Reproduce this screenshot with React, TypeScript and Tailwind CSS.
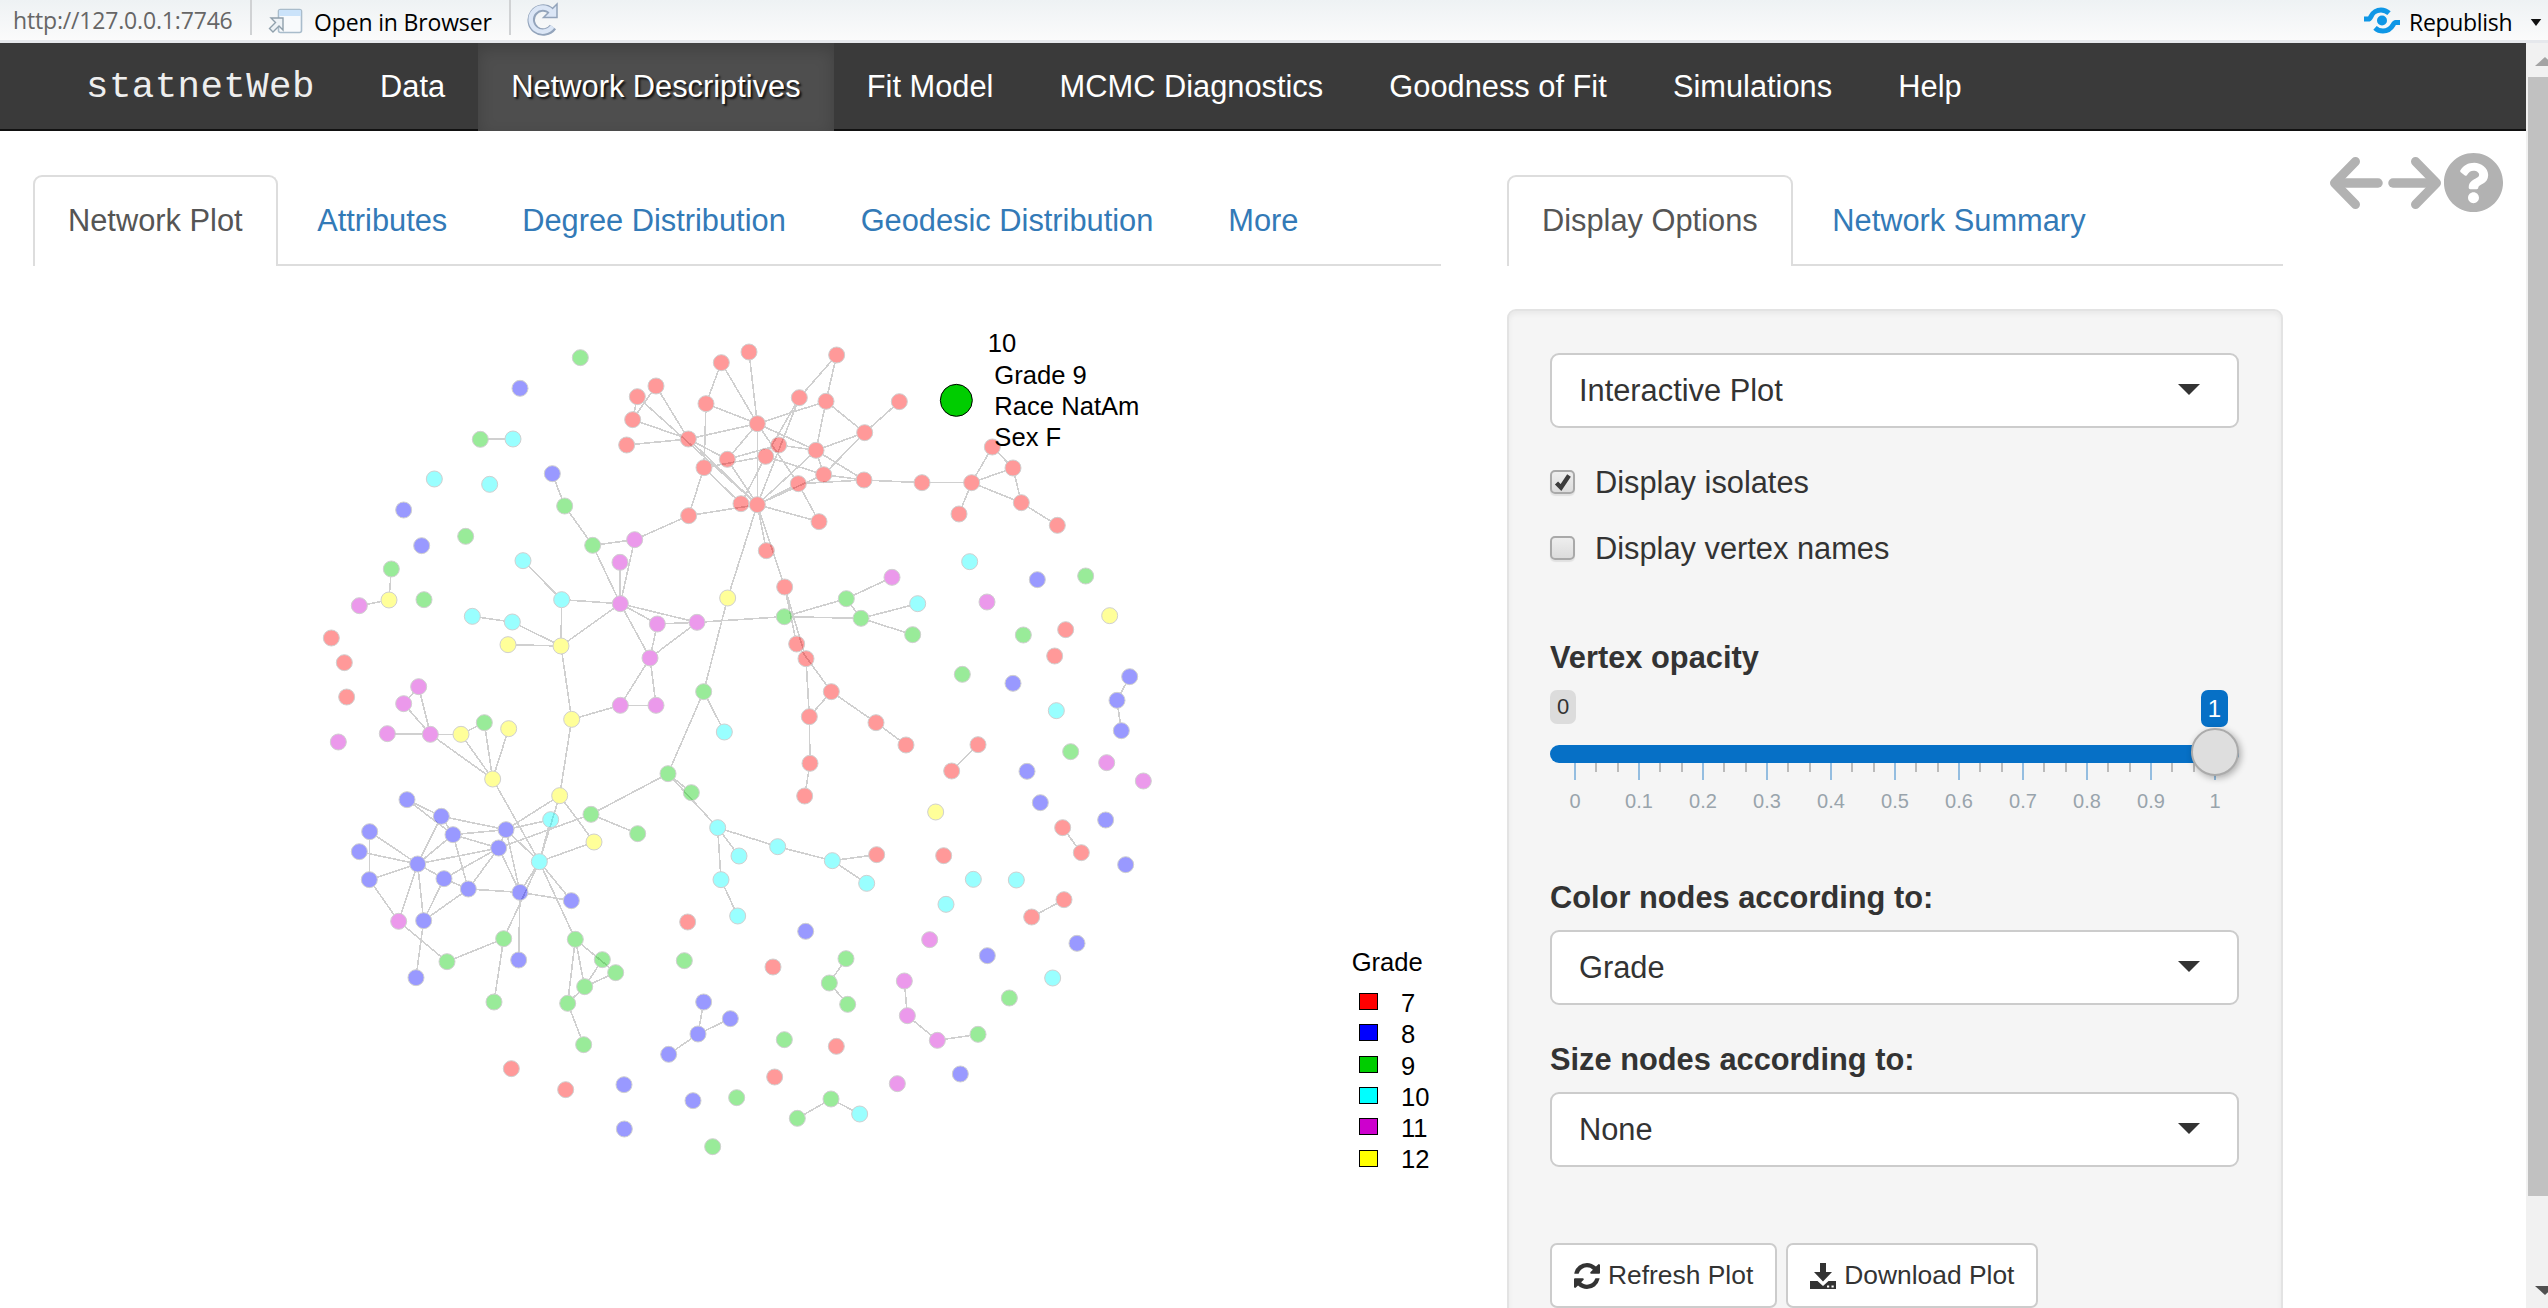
import React from "react";
import { FaQuestionCircle } from "react-icons/fa";

type Point = [number, number];

const GRADES: Record<string, { fill: string; label: string }> = {
  r: { fill: "#ff0000", label: "7" },
  b: { fill: "#0000ff", label: "8" },
  g: { fill: "#00cd00", label: "9" },
  c: { fill: "#00ffff", label: "10" },
  m: { fill: "#cd00cd", label: "11" },
  y: { fill: "#ffff00", label: "12" },
};

/* Vertex positions per grade, in plot units (three units to a pixel). */
const NODES: Record<string, Point[]> = {
  r: [
    [1011, 259], [1067, 227], [997, 328], [979, 404], [1164, 386], [1263, 157], [1217, 280], [1281, 447],
    [1211, 472], [1322, 580], [1165, 616], [1346, 125], [1609, 134], [1497, 262], [1577, 273], [1797, 274],
    [1371, 340], [1693, 367], [1435, 404], [1396, 438], [1547, 420], [1570, 493], [1494, 520], [1691, 509],
    [1865, 517], [2014, 517], [2076, 410], [2138, 473], [2163, 577], [1976, 611], [1371, 583], [1556, 634],
    [1398, 721], [1453, 830], [1489, 1001], [1517, 1045], [1593, 1144], [1527, 1219], [1727, 1237], [1817, 1304],
    [1529, 1359], [1513, 1457], [2271, 645], [93, 983], [132, 1057], [139, 1160], [2296, 958], [2263, 1037],
    [2033, 1303], [1954, 1382], [2287, 1552], [2343, 1627], [1729, 1633], [1930, 1636], [2291, 1768], [2194, 1820],
    [1162, 1835], [1418, 1970], [1608, 2208], [1423, 2300], [633, 2275], [796, 2338],
  ],
  m: [
    [1003, 688], [959, 756], [960, 880], [1071, 941], [1190, 936], [1049, 1043], [960, 1185], [1067, 1185],
    [177, 886], [355, 1129], [310, 1180], [261, 1270], [390, 1272], [114, 1295], [1775, 801], [2060, 875],
    [295, 1833], [1888, 1888], [1812, 2012], [1821, 2116], [1911, 2190], [1791, 2320], [2419, 1357], [2529, 1412],
  ],
  g: [
    [840, 142], [540, 387], [793, 587], [496, 678], [877, 705], [273, 776], [371, 868], [552, 1237],
    [1210, 1144], [1452, 919], [1638, 865], [1682, 924], [1837, 973], [2169, 974], [1986, 1092], [2356, 797],
    [872, 1512], [1103, 1390], [1173, 1447], [1012, 1570], [610, 1885], [825, 1887], [440, 1954], [906, 1948],
    [946, 1987], [853, 2029], [802, 2079], [581, 2075], [850, 2203], [1309, 2362], [1237, 2509], [1152, 1951],
    [2311, 1324], [1637, 1945], [1587, 2018], [1642, 2082], [2033, 2172], [2127, 2063], [1452, 2188], [1592, 2366],
    [1491, 2424],
  ],
  c: [
    [638, 386], [402, 506], [568, 522], [668, 751], [784, 868], [516, 918], [636, 935], [1272, 1265],
    [1852, 880], [2008, 754], [2268, 1201], [751, 1528], [717, 1654], [1252, 1552], [1316, 1637], [1262, 1708],
    [1312, 1817], [1432, 1609], [1596, 1651], [1699, 1719], [2019, 1707], [2148, 1709], [1937, 1782], [2257, 2003],
    [1678, 2411],
  ],
  y: [
    [266, 869], [623, 1003], [782, 1007], [1282, 863], [482, 1272], [625, 1255], [814, 1227], [577, 1406],
    [778, 1456], [881, 1595], [1906, 1505], [2428, 916],
  ],
  b: [
    [659, 234], [756, 490], [310, 599], [364, 706], [2211, 808], [2138, 1119], [2488, 1099], [2450, 1170],
    [2463, 1261], [320, 1468], [423, 1518], [458, 1573], [208, 1564], [177, 1624], [617, 1558], [595, 1613],
    [352, 1661], [207, 1708], [431, 1705], [504, 1736], [659, 1746], [813, 1771], [370, 1831], [655, 1949],
    [347, 2002], [971, 2323], [972, 2456], [1178, 2371], [1210, 2075], [1290, 2125], [1193, 2171], [1105, 2232],
    [2180, 1383], [2220, 1477], [1516, 1863], [2061, 1936], [2330, 1899], [1980, 2291], [2416, 1529], [2476, 1663],
  ],
};

/* Ties between students, written as pairs of vertex ids. */
const EDGES = `
r0-r2 r0-r30 r1-r2 r1-r4 r2-r4 r3-r4 r4-r16 r4-r7 r4-r30 r5-r6 r5-r16 r11-r16 r6-r16 r6-r8 r8-r10 r8-r9 r8-r19
r7-r16 r7-r18 r7-r30 r10-r30 r9-r19 r12-r13 r12-r14 r14-r16 r14-r17 r14-r20 r15-r17 r16-r20 r16-r30 r16-r22
r13-r30 r13-r19 r18-r20 r19-r21 r17-r20 r17-r21 r20-r21 r20-r23 r20-r30 r21-r23 r21-r30 r22-r30 r22-r23 r22-r31
r30-r31 r30-r32 r30-r33 r23-r24 r24-r25 r25-r26 r25-r27 r25-r28 r25-r29 r26-r27 r27-r28 r28-r42 r33-r34 r33-r35
r34-r36 r35-r37 r36-r37 r36-r38 r38-r39 r37-r40 r40-r41 r48-r49 r50-r51 r54-r55
r10-m0 g4-m0 g2-g4 b1-g2 g4-m2 m1-m2 m0-m2 m2-c4 m2-y2 m2-m3 m2-m4 m3-m4 m3-m5 m4-m5 m2-m5 m5-m6 m5-m7 m6-m7
m4-g9 g1-c0 c3-c4 c4-y2 c5-c6 c6-y2 y1-y2 y2-y6 y6-m6 y6-y8 g5-y0 m8-y0 r30-y3 y3-g8 g8-c7 g8-g17
m9-m10 m9-m12 m10-m12 m11-m12 m12-y4 y4-g7 y4-y7 m12-y7 g7-y7 y5-y7 y7-c12 y8-b14 y8-c12 c11-c12 y8-y9 y9-c12
g16-b15 g16-g17 g16-g19 g17-g18 g17-c13 b9-b10 b9-b11 b10-b14 b10-b16 b10-b11 b11-b14 b11-b15 b11-b19 b11-b16
b12-b16 b12-b17 b13-b16 b16-b17 b16-b15 b16-b18 b16-m16 b16-b22 b17-m16 b18-b15 b18-b19 b18-b22 b19-b15 b19-b20
b19-b22 b14-b15 b14-c12 b14-b20 b14-c11 b15-b20 b20-c12 b20-b21 b20-b23 c12-b21 c12-g20 c12-g21 g20-g22 m16-g22
b22-b24 g20-g27 g21-g24 g21-g25 g21-g26 g23-g25 g24-g25 g25-g26 g26-g28 c13-c17 c13-c14 c13-c15 c15-c16 c17-c18
c18-r52 c18-c19 g9-g10 g9-g11 g10-m14 g10-g11 g11-c8 g11-g12 b6-b7 b7-b8 g33-g34 g34-g35 m18-m19 m19-m20 m20-g36
g39-g40 g39-c24 b28-b30 b29-b30 b30-b31
`.trim().split(/\s+/);

const RADIUS = 24;

function find(id: string): Point {
  return NODES[id[0]][Number(id.slice(1))];
}

/* An edge runs from rim to rim, so it never shows through its own end points. */
function Edge({ pair }: { pair: string }) {
  const [from, to] = pair.split("-");
  const [x1, y1] = find(from);
  const [x2, y2] = find(to);
  const length = Math.hypot(x2 - x1, y2 - y1);
  const dx = ((x2 - x1) / length) * RADIUS;
  const dy = ((y2 - y1) / length) * RADIUS;
  return <line x1={x1 + dx} y1={y1 + dy} x2={x2 - dx} y2={y2 - dy} />;
}

function NetworkPlot() {
  return (
    <svg
      viewBox="-802 -127 4224 3120"
      className="block h-[1040px] w-[1408px] font-['Liberation_Sans',sans-serif]"
    >
      <g stroke="#d0d0d0" strokeWidth="4.8" shapeRendering="crispEdges">
        {EDGES.map((pair) => (
          <Edge key={pair} pair={pair} />
        ))}
      </g>
      {Object.entries(NODES).map(([grade, points]) => (
        <g key={grade} fill={GRADES[grade].fill} fillOpacity="0.4" stroke="#d0d0d0" strokeWidth="3">
          {points.map(([x, y]) => (
            <circle key={`${x}-${y}`} cx={x} cy={y} r={RADIUS} />
          ))}
        </g>
      ))}
      <circle cx="1968" cy="270" r="48" fill="#00cd00" stroke="#000" strokeWidth="3" />
      <g fontSize="76.8" fill="#000">
        <text x="2062" y="125">10</text>
        <text x="2082" y="220">Grade 9</text>
        <text x="2082" y="313">Race NatAm</text>
        <text x="2082" y="407">Sex F</text>
        <text x="3154" y="1982">Grade</text>
        {["r", "b", "g", "c", "m", "y"].map((grade, i) => (
          <g key={grade}>
            <rect
              x="3178"
              y={2050 + i * 93.8}
              width="54"
              height="48"
              fill={GRADES[grade].fill}
              stroke="#000"
              strokeWidth="3"
              shapeRendering="crispEdges"
            />
            <text x="3302" y={2105 + i * 93.8}>{GRADES[grade].label}</text>
          </g>
        ))}
      </g>
    </svg>
  );
}

function Toolbar() {
  return (
    <div className="flex h-[43px] items-start border-b-[3px] border-[#e6e8ec] bg-linear-to-b from-[#eef2f4] to-[#fbfbfb] font-['Open_Sans','Noto_Sans',sans-serif] text-[23px] leading-[40px]">
      <span className="ml-[13px] w-[237px] whitespace-nowrap tracking-[-0.17px] text-[#666]">http://127.0.0.1:7746</span>
      <div className="h-[35px] w-[2px] bg-[#d0d2d4]" />
      <svg viewBox="0 0 36 28" className="mt-[8px] ml-[16px] h-[28px] w-[36px]">
        <rect x="10.5" y="1.5" width="23" height="23" rx="2" fill="#f8fafc" stroke="#a9bccb" strokeWidth="1.6" />
        <path d="M11 3q0-1 1-1h20q1 0 1 1v5H11z" fill="#cbe3fa" />
        <path d="M3 10h12v12l-4-4-6 6-3.500-3.500 6-6z" fill="#edf2f6" stroke="#90a0ac" strokeWidth="1.4" />
      </svg>
      <span className="ml-[10px] mt-[2px] w-[195px] whitespace-nowrap tracking-[-0.16px] text-black">Open in Browser</span>
      <div className="h-[35px] w-[2px] bg-[#d0d2d4]" />
      <svg viewBox="0 0 34 34" className="mt-[2px] ml-[14px] h-[34px] w-[34px]" fill="none">
        <path d="M25.500 8.500A12 12 0 1 0 28 25" stroke="#93a4bb" strokeWidth="7.500" />
        <path d="M32 2v13.500H18.500z" fill="#dbe6f6" stroke="#93a4bb" strokeWidth="1.500" />
        <path d="M26.500 9.500A12 12 0 1 0 27.500 24.500" stroke="#dbe6f6" strokeWidth="4.500" />
      </svg>
      <div className="ml-auto flex items-start">
        <svg viewBox="0 0 36 27" className="mt-[7px] h-[27px] w-[36px]" fill="none" stroke="#0f97e6" strokeWidth="5">
          <circle cx="18" cy="13.500" r="5" fill="#0f97e6" stroke="none" />
          <path d="M0 12h4.500C7.500 12 7 3 17 3q4.500 0 8 3.200" />
          <path d="M36 15.500h-4.500C28.500 15.500 29 24 19 24q-4.500 0-8-3.200" />
        </svg>
        <span className="mt-[2px] ml-[9px] w-[121px] tracking-[-0.3px] text-black">Republish</span>
        <svg viewBox="0 0 12 8" className="mt-[19px] mr-[6px] h-[7px] w-[12px]">
          <path d="M0 0h12L6 8z" fill="#111" />
        </svg>
      </div>
    </div>
  );
}

const NAV_ITEMS = [
  "Data",
  "Network Descriptives",
  "Fit Model",
  "MCMC Diagnostics",
  "Goodness of Fit",
  "Simulations",
  "Help",
];

function Navbar() {
  return (
    <nav className="flex h-[88px] bg-[linear-gradient(to_bottom,#3a3a3a_86px,#111_86px)] leading-[88px] text-white">
      <span className="mr-[87px] w-[260px] pl-[86px] font-['Liberation_Mono',monospace] text-[37.4px] tracking-[0.45px] text-[#eee]">
        statnetWeb
      </span>
      {NAV_ITEMS.map((item) => (
        <a
          key={item}
          className={
            item === "Network Descriptives"
              ? "bg-[#4e4e4e] px-[33.1px] whitespace-nowrap shadow-[inset_0_6px_16px_rgba(0,0,0,0.18)] [text-shadow:2px_2px_2px_#111]"
              : "px-[33.1px] whitespace-nowrap"
          }
        >
          {item}
        </a>
      ))}
    </nav>
  );
}

function Tabs({ items }: { items: string[] }) {
  return (
    <div className="flex h-[91px] border-b-2 border-[#ddd]">
      {items.map((item, i) => (
        <a
          key={item}
          className={
            i === 0
              ? "mr-[4.6px] h-[91px] rounded-t-[9px] border-2 border-b-0 border-[#ddd] bg-white px-[33px] pt-[22px] leading-[44px] text-[#555]"
              : "mr-[4.9px] border-2 border-b-0 border-transparent px-[33px] pt-[22px] leading-[44px] text-[#337ab7]"
          }
        >
          {item}
        </a>
      ))}
    </div>
  );
}

function Select({ value }: { value: string }) {
  return (
    <div className="flex h-[75px] items-center justify-between rounded-[9px] border-2 border-[#ccc] bg-white pr-[37px] pl-[27px]">
      <span className="pt-[1px]">{value}</span>
      <svg viewBox="0 0 22 11" className="-mt-[2px] h-[11px] w-[22px]">
        <path d="M0 0h22L11 11z" fill="#333" />
      </svg>
    </div>
  );
}

function Checkbox({ label, checked }: { label: string; checked?: boolean }) {
  return (
    <label className="flex h-[44px] items-center leading-[44px]">
      <span className="mr-[20px] flex h-[24px] w-[25px] items-center justify-center rounded-[5px] border-2 border-[#a9a9a9] bg-linear-to-b from-[#eee] to-[#dcdcdc] shadow-[0_2px_1px_rgba(0,0,0,0.08)]">
        {checked && (
          <svg viewBox="0 0 18 18" className="h-[18px] w-[18px]" fill="none">
            <path d="M2.500 10l4.500 4.500L15 2.500" stroke="#3c3c3c" strokeWidth="4.4" />
          </svg>
        )}
      </span>
      <span className="pt-[1px]">{label}</span>
    </label>
  );
}

const TICKS = ["0", "0.1", "0.2", "0.3", "0.4", "0.5", "0.6", "0.7", "0.8", "0.9", "1"];

function OpacitySlider() {
  return (
    <div className="mt-[10px] h-[141px]">
      <div className="flex items-start justify-between pr-[11px]">
        <span className="h-[34px] w-[26px] rounded-[7px] bg-[#dcdcdc] text-center text-[22px] leading-[33px]">0</span>
        <span className="h-[37px] w-[27px] rounded-[7px] bg-[#0670c6] text-center text-[24px] leading-[37px] text-white">1</span>
      </div>
      <div className="relative mt-[18px] h-[18px] rounded-[9px] bg-[#0670c6]">
        <div className="absolute -top-[17px] right-0 z-10 h-[48px] w-[48px] rounded-full border-2 border-[#ababab] bg-[#dedede] shadow-[2px_2px_7px_rgba(0,0,0,0.3)]" />
      </div>
      <div className="mr-[-8px] ml-[-7px] flex">
        {TICKS.map((tick) => (
          <div key={tick} className="w-[64px] shrink-0 text-center text-[20px] leading-[24px] text-[#99a4ac]">
            <div className="flex h-[17px] justify-center">
              <div className="h-[17px] w-[2px] bg-[#94bde0]" />
              {tick !== "1" && (
                <div className="relative">
                  <div className="absolute left-[19px] h-[9px] w-[2px] bg-[#bbb]" />
                  <div className="absolute left-[41px] h-[9px] w-[2px] bg-[#bbb]" />
                </div>
              )}
            </div>
            <div className="mt-[9px]">{tick}</div>
          </div>
        ))}
      </div>
    </div>
  );
}

function PlotButton({ children }: { children: React.ReactNode }) {
  return (
    <button className="flex h-[65px] items-center rounded-[7px] border-2 border-[#ccc] bg-white px-[22px] text-[26.4px] whitespace-nowrap">
      {children}
    </button>
  );
}

function DisplayOptions() {
  return (
    <div className="mt-[43px] h-[1100px] rounded-[9px] border-2 border-[#e3e3e3] bg-[#f5f5f5] pr-[42px] pl-[41px] pt-[42px] text-[#333] shadow-[inset_0_3px_5px_rgba(0,0,0,0.05)]">
      <Select value="Interactive Plot" />
      <div className="mt-[32px] flex flex-col gap-[22px]">
        <Checkbox label="Display isolates" checked />
        <Checkbox label="Display vertex names" />
      </div>
      <div className="mt-[66px] leading-[44px] font-bold">Vertex opacity</div>
      <OpacitySlider />
      <div className="mt-[45px] mb-[10px] leading-[44px] font-bold">Color nodes according to:</div>
      <Select value="Grade" />
      <div className="mt-[33px] mb-[10px] leading-[44px] font-bold">Size nodes according to:</div>
      <Select value="None" />
      <div className="mt-[76px] flex gap-[9px]">
        <PlotButton>
          <svg viewBox="0 0 1536 1536" className="mr-[8px] h-[26px] w-[26px]" fill="#333">
            <path d="M1511 928q0 5-1 7-64 268-268 434.500T764 1536q-146 0-282.500-55T238 1324l-129 129q-19 19-45 19t-45-19-19-45V960q0-26 19-45t45-19h448q26 0 45 19t19 45-19 45l-137 137q71 66 161 102t187 36q134 0 250-65t186-179q11-17 53-117 8-23 30-23h192q13 0 22.500 9.500t9.500 22.500zm25-800v448q0 26-19 45t-45 19h-448q-26 0-45-19t-19-45 19-45l138-138Q969 256 768 256q-134 0-250 65T332 500q-11 17-53 117-8 23-30 23H50q-13 0-22.500-9.500T18 608v-7q65-268 270-434.500T768 0q146 0 284 55.500T1297 212l130-129q19-19 45-19t45 19 19 45z" />
          </svg>
          Refresh Plot
        </PlotButton>
        <PlotButton>
          <svg viewBox="0 0 26 26" className="mr-[8px] h-[26px] w-[26px]" fill="#333">
            <path d="M10 0h6v9h6l-9 9.500L4 9h6z" />
            <path fillRule="evenodd" d="M0 18h7.500l5.500 5 5.500-5H26v8H0zM17 22.500h2.200v2H17zM21.500 22.500h2.200v2h-2.200z" />
          </svg>
          Download Plot
        </PlotButton>
      </div>
    </div>
  );
}

function StepArrow({ className }: { className: string }) {
  return (
    <svg viewBox="0 0 54 54" className={className} fill="none" stroke="currentColor" strokeLinecap="round">
      <path d="M26.500 5.500L5.500 27l21 21.500" strokeWidth="9" strokeLinejoin="round" />
      <path d="M8 27h41" strokeWidth="9.500" />
    </svg>
  );
}

function Scrollbar() {
  return (
    <div className="flex w-[22px] flex-col overflow-hidden bg-[#f1f1f1]">
      <svg viewBox="0 0 20 9" className="mt-[14px] ml-[9px] h-[9px] w-[20px] shrink-0">
        <path d="M0 9h20L10 0z" fill="#a3a3a3" />
      </svg>
      <div className="mt-[11px] ml-[2px] h-[1119px] w-[35px] shrink-0 bg-[#c1c1c1]" />
      <svg viewBox="0 0 20 9" className="mt-[90px] ml-[9px] h-[9px] w-[20px] shrink-0">
        <path d="M0 0h20L10 9z" fill="#505050" />
      </svg>
    </div>
  );
}

export default function App() {
  return (
    <div className="flex h-[1308px] w-[2548px] flex-col overflow-hidden bg-white font-['Liberation_Sans',Arial,sans-serif] text-[30.8px]">
      <Toolbar />
      <div className="flex min-h-0 flex-1">
        <div className="w-[2526px] overflow-hidden">
          <Navbar />
          <main className="flex items-start pl-[33px]">
            <section className="mt-[44px] w-[1408px]">
              <Tabs
                items={["Network Plot", "Attributes", "Degree Distribution", "Geodesic Distribution", "More"]}
              />
              <div className="pt-[2px]">
                <NetworkPlot />
              </div>
            </section>
            <section className="mt-[44px] ml-[66px] w-[776px]">
              <Tabs items={["Display Options", "Network Summary"]} />
              <DisplayOptions />
            </section>
            <div className="mt-[21px] ml-[46px] flex items-center text-[#b2b2b2]">
              <StepArrow className="mr-[5px] h-[54px] w-[54px]" />
              <StepArrow className="h-[54px] w-[54px] rotate-180" />
              <FaQuestionCircle className="ml-[1px] h-[61px] w-[61px]" />
            </div>
          </main>
        </div>
        <Scrollbar />
      </div>
    </div>
  );
}
